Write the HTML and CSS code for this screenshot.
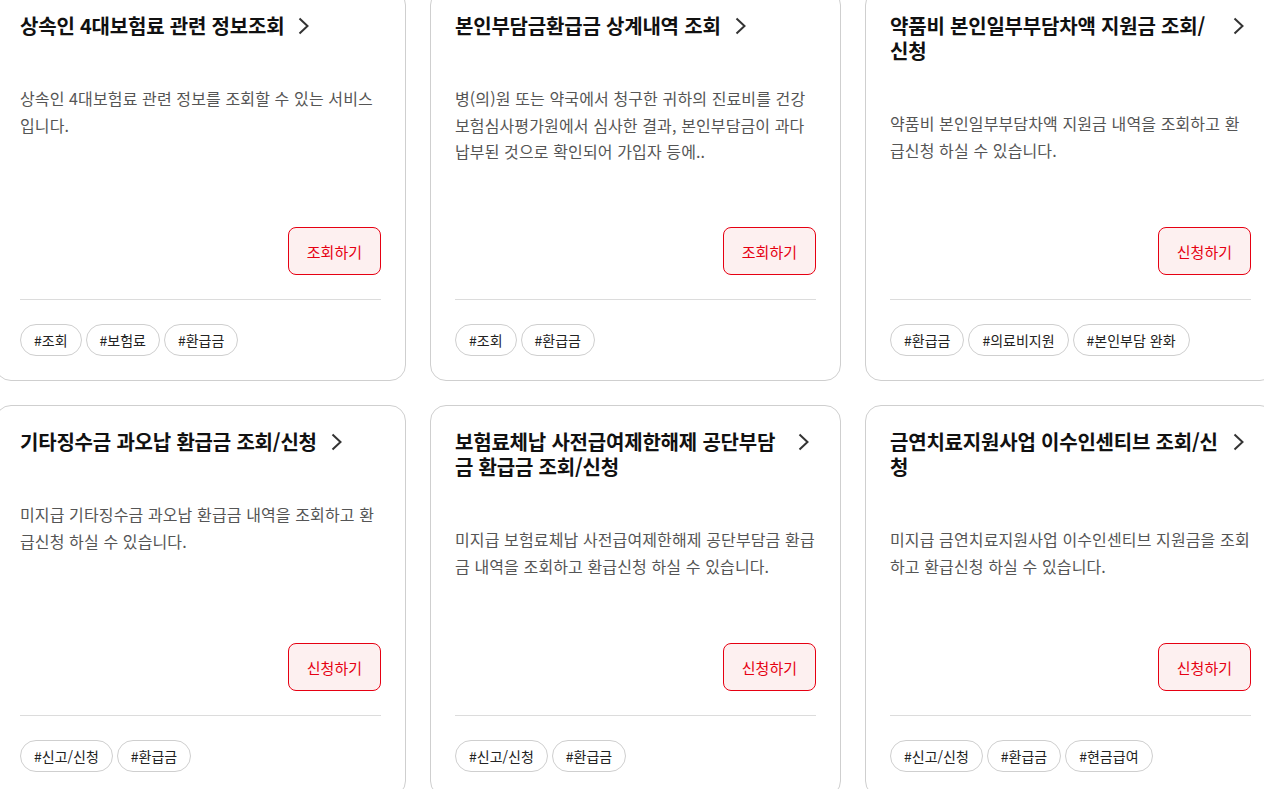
FILE: index.html
```html
<!DOCTYPE html>
<html lang="ko">
<head>
<meta charset="utf-8">
<title>환급금 서비스</title>
<link rel="stylesheet" href="styles.css">
</head>
<body>
<ul class="list">
  <li class="card">
    <div class="head"><h3 class="title">상속인 4대보험료 관련 정보조회</h3><span class="arrow"><svg width="12" height="18" viewBox="0 0 12 18"><polyline points="1.5,1.5 9.5,9 1.5,16.5" fill="none" stroke="#333" stroke-width="2"/></svg></span></div>
    <p class="desc">상속인 4대보험료 관련 정보를 조회할 수 있는 서비스입니다.</p>
    <div class="action"><button class="btn">조회하기</button></div>
    <div class="tags"><span class="tag">#조회</span><span class="tag">#보험료</span><span class="tag">#환급금</span></div>
  </li>
  <li class="card">
    <div class="head"><h3 class="title">본인부담금환급금 상계내역 조회</h3><span class="arrow"><svg width="12" height="18" viewBox="0 0 12 18"><polyline points="1.5,1.5 9.5,9 1.5,16.5" fill="none" stroke="#333" stroke-width="2"/></svg></span></div>
    <p class="desc">병(의)원 또는 약국에서 청구한 귀하의 진료비를 건강보험심사평가원에서 심사한 결과, 본인부담금이 과다납부된 것으로 확인되어 가입자 등에..</p>
    <div class="action"><button class="btn">조회하기</button></div>
    <div class="tags"><span class="tag">#조회</span><span class="tag">#환급금</span></div>
  </li>
  <li class="card">
    <div class="head"><h3 class="title">약품비 본인일부부담차액 지원금 조회/신청</h3><span class="arrow"><svg width="12" height="18" viewBox="0 0 12 18"><polyline points="1.5,1.5 9.5,9 1.5,16.5" fill="none" stroke="#333" stroke-width="2"/></svg></span></div>
    <p class="desc">약품비 본인일부부담차액 지원금 내역을 조회하고 환급신청 하실 수 있습니다.</p>
    <div class="action"><button class="btn">신청하기</button></div>
    <div class="tags"><span class="tag">#환급금</span><span class="tag">#의료비지원</span><span class="tag">#본인부담 완화</span></div>
  </li>
  <li class="card">
    <div class="head"><h3 class="title">기타징수금 과오납 환급금 조회/신청</h3><span class="arrow"><svg width="12" height="18" viewBox="0 0 12 18"><polyline points="1.5,1.5 9.5,9 1.5,16.5" fill="none" stroke="#333" stroke-width="2"/></svg></span></div>
    <p class="desc">미지급 기타징수금 과오납 환급금 내역을 조회하고 환급신청 하실 수 있습니다.</p>
    <div class="action"><button class="btn">신청하기</button></div>
    <div class="tags"><span class="tag">#신고/신청</span><span class="tag">#환급금</span></div>
  </li>
  <li class="card">
    <div class="head"><h3 class="title">보험료체납 사전급여제한해제 공단부담금 환급금 조회/신청</h3><span class="arrow"><svg width="12" height="18" viewBox="0 0 12 18"><polyline points="1.5,1.5 9.5,9 1.5,16.5" fill="none" stroke="#333" stroke-width="2"/></svg></span></div>
    <p class="desc">미지급 보험료체납 사전급여제한해제 공단부담금 환급금 내역을 조회하고 환급신청 하실 수 있습니다.</p>
    <div class="action"><button class="btn">신청하기</button></div>
    <div class="tags"><span class="tag">#신고/신청</span><span class="tag">#환급금</span></div>
  </li>
  <li class="card">
    <div class="head"><h3 class="title">금연치료지원사업 이수인센티브 조회/신청</h3><span class="arrow"><svg width="12" height="18" viewBox="0 0 12 18"><polyline points="1.5,1.5 9.5,9 1.5,16.5" fill="none" stroke="#333" stroke-width="2"/></svg></span></div>
    <p class="desc">미지급 금연치료지원사업 이수인센티브 지원금을 조회하고 환급신청 하실 수 있습니다.</p>
    <div class="action"><button class="btn">신청하기</button></div>
    <div class="tags"><span class="tag">#신고/신청</span><span class="tag">#환급금</span><span class="tag">#현금급여</span></div>
  </li>
</ul>
</body>
</html>
```
FILE: styles.css
```css
html, body {
  margin: 0;
  padding: 0;
  overflow: hidden;
  background: #fff;
}
body {
  font-family: "Noto Sans CJK KR", "Noto Sans", sans-serif;
  color: #111;
}
.list {
  list-style: none;
  margin: -11px 0 0 -5px;
  padding: 0;
  display: grid;
  grid-template-columns: repeat(3, 411px);
  gap: 24px;
}
.card {
  box-sizing: border-box;
  height: 392px;
  border: 1px solid #cfcfcf;
  border-radius: 16px;
  padding: 23px 24px 24px;
  display: flex;
  flex-direction: column;
  background: #fff;
}
.head {
  display: flex;
  align-items: flex-start;
  gap: 8px;
}
.title {
  margin: 0;
  font-size: 20px;
  font-weight: 700;
  line-height: 25px;
  letter-spacing: -0.2px;
  color: #111;
  flex: 0 1 auto;
}
.arrow {
  flex: 0 0 24px;
  width: 24px;
  height: 25px;
  display: flex;
  align-items: center;
  justify-content: center;
}
.arrow svg {
  display: block;
}
.desc {
  margin: 47px 0 0;
  font-size: 16px;
  line-height: 26.5px;
  letter-spacing: 0.12px;
  color: #555;
}
.action {
  margin-top: auto;
  display: flex;
  justify-content: flex-end;
  padding-bottom: 24px;
  border-bottom: 1px solid #dcdcdc;
}
.btn {
  box-sizing: border-box;
  height: 48px;
  padding: 0 18px;
  border: 1px solid #e60012;
  border-radius: 8px;
  background: #fdf0f0;
  color: #e60012;
  font-family: inherit;
  font-size: 15px;
  line-height: 1;
}
.tags {
  margin-top: 24px;
  display: flex;
  gap: 4px;
}
.tag {
  box-sizing: border-box;
  height: 32px;
  padding: 0 13px;
  border: 1px solid #cfcfcf;
  border-radius: 16px;
  font-size: 14px;
  line-height: 30px;
  color: #222;
  white-space: nowrap;
}
```
